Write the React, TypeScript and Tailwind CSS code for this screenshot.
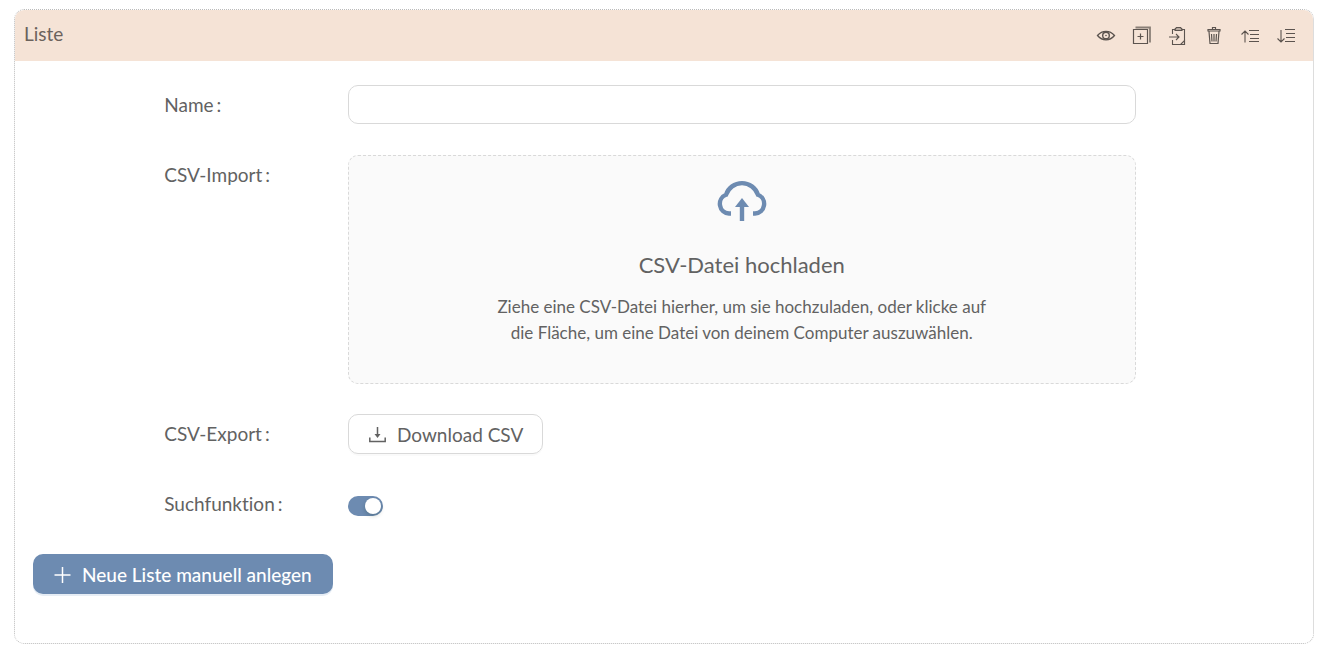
import { ReactNode, useState } from 'react';

type IconProps = { children: ReactNode };

function ToolIcon({ children }: IconProps) {
  return (
    <svg
      width="20"
      height="20"
      viewBox="0 0 20 20"
      fill="none"
      stroke="currentColor"
      strokeWidth="1.1"
      aria-hidden="true"
    >
      {children}
    </svg>
  );
}

const tools = [
  {
    label: 'Vorschau',
    icon: (
      <>
        <path
          d="M1.500 9.500C4 6.500 6.800 5.300 10 5.300s6 1.200 8.500 4.200C16 12.500 13.200 13.800 10 13.800S4 12.500 1.500 9.500Z"
          strokeWidth="1.300"
        />
        <circle cx="10" cy="9.500" r="3.300" strokeWidth="1.400" />
        <circle cx="10" cy="9.500" r="0.800" fill="currentColor" stroke="none" />
      </>
    ),
  },
  {
    label: 'Duplizieren',
    icon: (
      <>
        <path d="M1.500 3.500h14v14h-14zM8.500 7.500v6M5.500 10.500h6" strokeWidth="1.200" />
        <path d="M3.500 1.500h14.500v15" strokeWidth="1.800" strokeOpacity="0.700" />
      </>
    ),
  },
  {
    label: 'Einfügen',
    icon: (
      <>
        <path d="M4.500 8V3.500h3M13.500 3.500h3v15h-12V14" />
        <path
          d="M7 4.500h7V3l-1.500-1.500h-4L7 3z"
          fill="currentColor"
          fillOpacity="0.400"
        />
        <path d="M1 11h10M8 8l3 3-3 3M16.500 14.500v4h-4z" />
      </>
    ),
  },
  {
    label: 'Löschen',
    icon: (
      <path
        d="M4 5h12V3.500H4zM8.500 3.500v-2h3v2M5 5.500l1 12h8l1-12M7.500 8l.5 7.500M10 8v7.500M12.500 8l-.5 7.500"
        strokeWidth="1.200"
      />
    ),
  },
  {
    label: 'Nach oben',
    icon: (
      <path d="M5 16.500V5M1.500 8.500L5 5l3.500 3.500M9 4.500h10M10 8.500h9M10 12.500h9M9 15.500h10" />
    ),
  },
  {
    label: 'Nach unten',
    icon: (
      <path d="M5 4v12M1.500 12.500L5 16l3.500-3.500M9 3.500h10M10 7.500h9M10 11.500h9M9 15.500h10" />
    ),
  },
];

type RowProps = { label: string; htmlFor: string; children: ReactNode };

function FormRow({ label, htmlFor, children }: RowProps) {
  return (
    <div className="grid grid-cols-[5fr_7fr_30fr_6fr]">
      <label htmlFor={htmlFor} className="col-start-2 leading-10">
        {label}
        <span className="ml-[3px]">:</span>
      </label>
      <div className="min-w-0">{children}</div>
    </div>
  );
}

export default function App() {
  const [name, setName] = useState('');
  const [search, setSearch] = useState(true);

  return (
    <main className="bg-white pt-[9px] pr-[13px] pb-1.5 pl-3.5 font-['Lato',sans-serif] text-[19px] text-[#626262] [font-variant-ligatures:none]">
      <section className="overflow-hidden rounded-[10px] border border-dotted border-[#bbbbbb]">
        <header className="flex h-[51px] items-center justify-between bg-[#f5e3d6] pr-[17px] pb-0.5 pl-[9px]">
          <h1 className="text-[#6b625c]">Liste</h1>
          <div className="flex gap-4 pt-0.5 text-[#5c544f]">
            {tools.map((tool) => (
              <button
                key={tool.label}
                type="button"
                aria-label={tool.label}
                className="cursor-pointer"
              >
                <ToolIcon>{tool.icon}</ToolIcon>
              </button>
            ))}
          </div>
        </header>

        <form
          className="pt-6 pr-5 pb-[49px] pl-[18px]"
          onSubmit={(e) => e.preventDefault()}
        >
          <div className="flex flex-col gap-[30px]">
            <FormRow label="Name" htmlFor="name">
              <input
                id="name"
                type="text"
                value={name}
                onChange={(e) => setName(e.target.value)}
                className="block h-[39px] w-full rounded-[10px] border border-[#d9d9d9] px-3 outline-none focus:border-[#6d8bb1]"
              />
            </FormRow>

            <FormRow label="CSV-Import" htmlFor="csv-import">
              <label
                htmlFor="csv-import"
                className="flex cursor-pointer flex-col items-center rounded-[10px] border border-dashed border-[#d9d9d9] bg-[#fafafa] px-4 pt-5 pb-[37px] text-center"
              >
                <svg
                  width="52"
                  height="52"
                  viewBox="0 0 52 52"
                  fill="none"
                  stroke="#6d8bb1"
                  strokeWidth="4.400"
                  aria-hidden="true"
                >
                  <path d="M15 37.500h-2A9.700 9.700 0 0 1 10 18.800A16.800 16.800 0 0 1 42 18.800A9.700 9.700 0 0 1 39 37.500h-2" />
                  <path d="M26 45V29" />
                  <path d="M26 22l7 9H19z" fill="#6d8bb1" stroke="none" />
                </svg>
                <span className="mt-[15px] text-[22px] leading-11">
                  CSV-Datei hochladen
                </span>
                <span className="mt-[7px] max-w-[490px] text-[17px] leading-[26px]">
                  Ziehe eine CSV-Datei hierher, um sie hochzuladen, oder klicke
                  auf die Fläche, um eine Datei von deinem Computer auszuwählen.
                </span>
                <input
                  id="csv-import"
                  type="file"
                  accept=".csv"
                  className="sr-only"
                />
              </label>
            </FormRow>

            <FormRow label="CSV-Export" htmlFor="csv-export">
              <button
                id="csv-export"
                type="button"
                className="flex h-10 cursor-pointer items-center gap-2.5 rounded-[10px] border border-[#d9d9d9] px-[19px] pt-0.5 shadow-[0_2px_0_rgba(0,0,0,0.02)]"
              >
                <svg
                  width="19"
                  height="19"
                  viewBox="0 0 19 19"
                  fill="none"
                  stroke="currentColor"
                  strokeWidth="1.500"
                  aria-hidden="true"
                >
                  <path d="M1.800 11.500v4h15.400v-4M9.500 1v8" />
                  <path d="M9.500 12L6.500 8h6z" fill="currentColor" stroke="none" />
                </svg>
                Download CSV
              </button>
            </FormRow>

            <FormRow label="Suchfunktion" htmlFor="search">
              <div className="-mb-1 flex h-11 items-center">
                <input
                  id="search"
                  type="checkbox"
                  role="switch"
                  checked={search}
                  onChange={(e) => setSearch(e.target.checked)}
                  className="h-5 w-[35px] cursor-pointer appearance-none rounded-full bg-gray-300 p-0.5 before:block before:size-4 before:rounded-full before:bg-white before:shadow-[0_2px_4px_rgba(0,35,11,0.2)] checked:bg-[#6d8bb1] checked:before:ml-[15px]"
                />
              </div>
            </FormRow>
          </div>

          <button
            type="button"
            className="mt-[30px] flex h-10 cursor-pointer items-center gap-2.5 rounded-[10px] bg-[#6d8bb1] pt-0.5 pr-[21px] pl-5 font-medium text-white shadow-[0_2px_0_#e6edf5]"
          >
            <svg
              width="19"
              height="19"
              viewBox="0 0 19 19"
              stroke="currentColor"
              strokeWidth="1.500"
              aria-hidden="true"
            >
              <path d="M9.500 1v16M1.500 9h16" />
            </svg>
            Neue Liste manuell anlegen
          </button>
        </form>
      </section>
    </main>
  );
}
